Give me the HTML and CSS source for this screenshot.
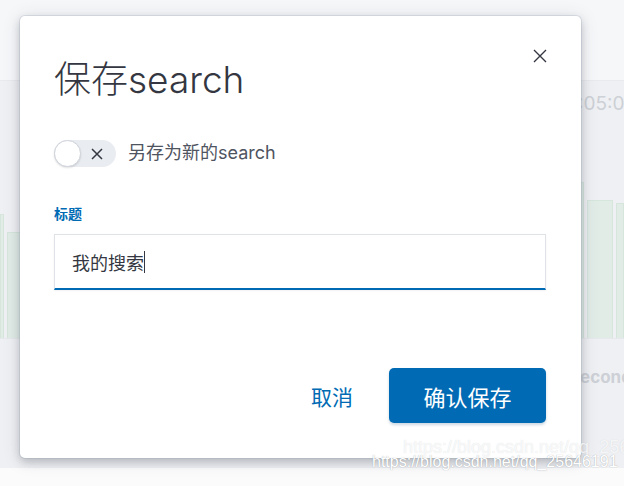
FILE: index.html
```html
<!DOCTYPE html>
<html>
<head>
  <title>保存search</title>
  <link rel="stylesheet" href="styles.css">
</head>
<body>
  <!-- page behind the modal -->
  <div class="page">
    <div class="page-header"></div>
    <div class="page-time">:05:0</div>
    <div class="chart">
      <div class="bars bars-left">
        <span class="bar" style="height: 123px"></span>
        <span class="bar" style="height: 105px"></span>
      </div>
      <div class="bars bars-right">
        <span class="bar" style="height: 155px"></span>
        <span class="bar" style="height: 137px"></span>
        <span class="bar" style="height: 134px"></span>
      </div>
    </div>
    <div class="page-axis">econd</div>
  </div>

  <!-- save modal -->
  <div class="modal">
    <button class="modal-close" type="button" aria-label="关闭">
      <svg width="14" height="14" viewBox="0 0 14 14"><path d="M1 1 L13 13 M13 1 L1 13" stroke="#343741" stroke-width="1.4" fill="none"/></svg>
    </button>
    <h1 class="modal-title">保存search</h1>

    <div class="switch-row">
      <span class="switch">
        <span class="switch-knob"></span>
        <svg class="switch-icon" width="14" height="14" viewBox="0 0 14 14"><path d="M2 2 L12 12 M12 2 L2 12" stroke="#343741" stroke-width="1.5" fill="none"/></svg>
      </span>
      <span class="switch-label">另存为新的search</span>
    </div>

    <div class="form-row">
      <label class="form-label" for="title">标题</label>
      <div class="field">我的搜索<span class="caret"></span></div>
    </div>

    <div class="modal-footer">
      <button class="btn-empty" type="button">取消</button>
      <button class="btn-primary" type="button">确认保存</button>
    </div>
  </div>

  <div class="mark mark-faint">https://blog.csdn.net/qq_256</div>
  <div class="mark mark-white">https://blog.csdn.net/qq_25646191</div>
</body>
</html>
```

FILE: styles.css
```css
/* save search modal */
body {
  margin: 0;
  width: 624px;
  height: 486px;
  overflow: hidden;
  position: relative;
  background: #fbfbfc;
  font-family: "Inter", "Noto Sans CJK SC", sans-serif;
  color: #343741;
}
.page {
  position: absolute;
  left: 0;
  top: 0;
  width: 624px;
  height: 468px;
  background: #eff0f3;
}
.page-header {
  height: 80px;
  background: #f6f7f9;
  border-bottom: 1px solid #e8eaee;
}
.page-time {
  position: absolute;
  left: 578px;
  top: 92px;
  font-size: 19px;
  color: #cdd0d6;
}
.chart {
  position: absolute;
  left: 0;
  top: 150px;
  width: 624px;
  height: 188px;
  display: flex;
  justify-content: space-between;
  border-bottom: 1px solid #e6e8ec;
}
.bars {
  display: flex;
  align-items: flex-end;
  gap: 3px;
}
.bar {
  display: block;
  background: #e1ece7;
  border: 1px solid #d6e6dd;
  border-bottom: none;
}
.bars-left .bar:first-child { width: 2px; }
.bars-left .bar:last-child { width: 12px; }
.bars-right .bar:nth-child(1) { width: 10px; }
.bars-right .bar:nth-child(2) { width: 24px; }
.bars-right .bar:nth-child(3) { width: 6px; }
.page-axis {
  position: absolute;
  left: 580px;
  top: 367px;
  font-size: 17px;
  font-weight: 700;
  color: #cdd0d6;
}

.modal {
  position: absolute;
  left: 20px;
  top: 16px;
  width: 561px;
  height: 442px;
  box-sizing: border-box;
  padding: 42px 35px 35px 34px;
  background: #fff;
  border-radius: 5px;
  box-shadow: 0 0 0 1px rgba(152, 162, 179, 0.25), 0 4px 8px rgba(60, 66, 80, 0.25), 0 2px 18px rgba(60, 66, 80, 0.15);
  display: flex;
  flex-direction: column;
}
.modal-close {
  position: absolute;
  top: 26px;
  right: 27px;
  width: 28px;
  height: 28px;
  padding: 0;
  border: none;
  background: none;
  display: flex;
  align-items: center;
  justify-content: center;
}
.modal-title {
  margin: 0;
  font-size: 37px;
  line-height: 44px;
  font-weight: 300;
  color: #343741;
}
.switch-row {
  display: flex;
  align-items: center;
  margin-top: 38px;
}
.switch {
  position: relative;
  width: 62px;
  height: 27px;
  border-radius: 14px;
  background: #e9ecf1;
  display: flex;
  align-items: center;
  justify-content: flex-end;
  padding-right: 12px;
  box-sizing: border-box;
}
.switch-knob {
  position: absolute;
  left: 0;
  top: 0;
  width: 25px;
  height: 25px;
  border-radius: 50%;
  background: #fff;
  border: 1px solid #cfd3da;
  box-shadow: 0 1px 2px rgba(0, 0, 0, 0.12);
}
.switch-label {
  margin-left: 12px;
  font-size: 18px;
  line-height: 24px;
  color: #4f5461;
  margin-top: -1px;
}
.form-row {
  margin-top: 37px;
}
.form-label {
  display: block;
  font-size: 14px;
  line-height: 20px;
  font-weight: 700;
  color: #006bb4;
}
.field {
  margin-top: 10px;
  height: 56px;
  box-sizing: border-box;
  padding: 0 17px;
  display: flex;
  align-items: center;
  font-size: 18px;
  color: #343741;
  background: #fff;
  border: 1px solid #dfe2e7;
  border-bottom: 2px solid #006bb4;
  box-shadow: 0 1px 2px rgba(0, 0, 0, 0.06);
}
.caret {
  display: inline-block;
  width: 1px;
  height: 22px;
  background: #343741;
}
.modal-footer {
  margin-top: auto;
  display: flex;
  justify-content: flex-end;
  align-items: center;
}
.btn-empty {
  border: none;
  background: none;
  font-family: inherit;
  font-size: 21px;
  color: #006bb4;
  padding: 0 14px;
  margin-right: 22px;
}
.btn-primary {
  width: 157px;
  height: 55px;
  border: none;
  border-radius: 5px;
  background: #006bb4;
  color: #fff;
  font-family: inherit;
  font-size: 22px;
  box-shadow: 0 2px 3px rgba(0, 60, 110, 0.2);
}
.mark {
  position: absolute;
  font-family: "Liberation Sans", Arial, sans-serif;
  white-space: nowrap;
  color: rgba(255, 255, 255, 0.75);
}
.mark-faint {
  left: 403px;
  top: 437px;
  font-size: 18px;
  text-shadow: 0 0 1px rgba(120, 126, 138, 0.25);
}
.mark-white {
  left: 372px;
  top: 453px;
  font-size: 16px;
  color: #fff;
  text-shadow: 0 0 1px rgba(90, 95, 105, 0.6);
}
```
